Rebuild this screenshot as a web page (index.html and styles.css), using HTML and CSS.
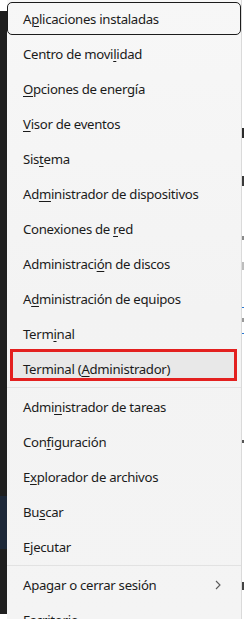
FILE: index.html
```html
<!DOCTYPE html>
<html lang="es">
<head>
<meta charset="utf-8">
<link rel="stylesheet" href="styles.css">
</head>
<body>
<div class="screen">
  <div class="left-strip">
    <div class="strip-dark-top"></div>
    <div class="strip-blue"></div>
    <div class="strip-dark-bottom"></div>
  </div>
  <div class="menu">
    <div class="item focused"><span class="label">A<u>p</u>licaciones instaladas</span></div>
    <div class="item"><span class="label">Centro de movi<u>l</u>idad</span></div>
    <div class="item"><span class="label"><u>O</u>pciones de energía</span></div>
    <div class="item"><span class="label"><u>V</u>isor de eventos</span></div>
    <div class="item"><span class="label">Sis<u>t</u>ema</span></div>
    <div class="item"><span class="label">Ad<u>m</u>inistrador de dispositivos</span></div>
    <div class="item"><span class="label">Conexiones de <u>r</u>ed</span></div>
    <div class="item"><span class="label">Administraci<u>ó</u>n de discos</span></div>
    <div class="item"><span class="label">A<u>d</u>ministración de equipos</span></div>
    <div class="item"><span class="label">Term<u>i</u>nal</span></div>
    <div class="item marked"><span class="label">Terminal (<u>A</u>dministrador)</span></div>
    <div class="sep"></div>
    <div class="item"><span class="label">Admi<u>n</u>istrador de tareas</span></div>
    <div class="item"><span class="label">Con<u>f</u>iguración</span></div>
    <div class="item"><span class="label">E<u>x</u>plorador de archivos</span></div>
    <div class="item"><span class="label">Bu<u>s</u>car</span></div>
    <div class="item"><span class="label">E<u>j</u>ecutar</span></div>
    <div class="sep"></div>
    <div class="item"><span class="label">Apa<u>g</u>ar o cerrar sesión</span>
      <svg class="chevron" width="6" height="10" viewBox="0 0 6 10"><path d="M1 1 L5 5 L1 9" fill="none" stroke="#5a5a5a" stroke-width="1.1"/></svg>
    </div>
    <div class="item"><span class="label"><u>E</u>scritorio</span></div>
  </div>
  <div class="right-strip"></div>
</div>
</body>
</html>
```
FILE: styles.css
```css
html, body {
  margin: 0;
  padding: 0;
  background: #ffffff;
}
.screen {
  display: flex;
  width: 244px;
  height: 619px;
  overflow: hidden;
  background: #ffffff;
}
.left-strip {
  width: 7px;
  flex: none;
  margin-top: 11px;
  height: 603px;
  display: flex;
  flex-direction: column;
}
.strip-dark-top {
  height: 485px;
  background: #1f1f1f;
}
.strip-blue {
  height: 53px;
  background: #1d2838;
}
.strip-dark-bottom {
  flex: 1;
  background: #1f1f1f;
}
.menu {
  width: 234px;
  flex: none;
  border-right: 1px solid #dadada;
  background: linear-gradient(180deg, #f7f7f7 0%, #f3f3f3 50%, #f4f4f4 100%);
  padding-top: 1px;
  font-family: "Noto Sans", "Open Sans", sans-serif;
  font-size: 13.2px;
  letter-spacing: -0.3px;
  color: #1b1b1b;
}
.item {
  position: relative;
  height: 35px;
  display: flex;
  align-items: center;
  padding-left: 16px;
  padding-right: 20px;
  white-space: nowrap;
}
.label {
  position: relative;
  z-index: 1;
}
.label u {
  text-decoration-thickness: 1px;
  text-underline-offset: 2px;
}
.focused::before {
  content: "";
  position: absolute;
  left: 0;
  right: 0;
  top: 1px;
  bottom: 1px;
  border: 1.6px solid #1c1c1c;
  border-radius: 5px;
}
.marked::before {
  content: "";
  position: absolute;
  left: 3px;
  width: 221px;
  top: -2px;
  height: 26px;
  border: 3px solid #e3201f;
  background: #e8e8e8;
}
.sep {
  height: 1px;
  margin: 1px 0 1px;
  background: #e2e2e2;
}
.chevron {
  margin-left: auto;
}
.right-strip {
  width: 2px;
  flex: none;
  background-color: #ffffff;
  background-image:
    linear-gradient(#2b2b2b, #2b2b2b),
    linear-gradient(#3a3a3a, #3a3a3a),
    linear-gradient(#8a8a8a, #8a8a8a),
    linear-gradient(#bdbdbd, #bdbdbd),
    linear-gradient(#2a78d0, #2a78d0),
    linear-gradient(#9a9a9a, #9a9a9a),
    linear-gradient(#2a78d0, #2a78d0),
    linear-gradient(#555555, #555555),
    linear-gradient(#444444, #444444);
  background-size: 2px 10px, 2px 10px, 2px 4px, 2px 8px, 2px 1px, 2px 4px, 2px 1px, 2px 3px, 2px 8px;
  background-position: 0 128px, 0 176px, 0 236px, 0 262px, 0 307px, 0 318px, 0 333px, 0 440px, 0 582px;
  background-repeat: no-repeat;
}
```
